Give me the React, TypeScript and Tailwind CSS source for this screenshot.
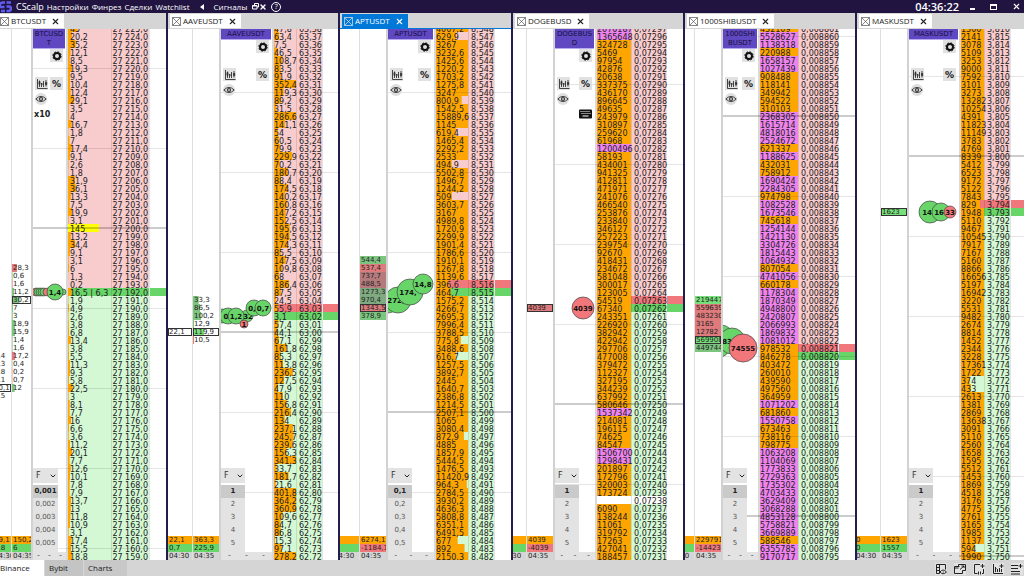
import React from 'react';
import { ChevronDown, X } from 'lucide-react';
import clsx from 'clsx';

const ROW = 8;
const ROWS = 67;

type Tone = 'green' | 'red' | 'paleGreen' | 'mutedRed' | 'mutedGreen' | 'none';

interface ClusterRow {
  text: string;
  tone: Tone;
  fill: number;
  boxed?: boolean;
}

interface Cluster {
  start: number;
  rows: ClusterRow[];
  total: string;
  delta: string;
  deltaTone: Tone;
  time: string;
}

interface Bubble {
  x: number;
  y: number;
  r: number;
  side: 'buy' | 'sell';
  text?: string;
  textX?: number;
}

interface Market {
  symbol: string;
  active?: boolean;
  topTick: number;
  decimals: number;
  bestAsk: number;
  sharedBest?: boolean;
  fullVolume: number;
  volumes: string;
  priceRight?: boolean;
  sizes: string[];
  badge?: 'x10' | 'keyboard';
  older: Cluster;
  latest: Cluster;
  bubbles: Bubble[];
  widths: { older: string; cluster: string; latest: string; volume: string; price: string; rest: string; form: string };
}

const toneClass: Record<Tone, string> = {
  green: 'from-[#7cc57f] to-[#7cc57f]',
  red: 'from-[#e07b7d] to-[#e07b7d]',
  paleGreen: 'from-[#78e07b] to-[#78e07b]',
  mutedRed: 'from-[#b57a7c] to-[#b57a7c]',
  mutedGreen: 'from-[#80ab81] to-[#80ab81]',
  none: 'from-transparent to-transparent',
};

const row = (text: string, tone: Tone = 'none', fill = 100, boxed = false): ClusterRow => ({ text, tone, fill, boxed });

const blank = (total = '', delta = ''): Cluster => ({
  start: 0,
  rows: [],
  total,
  delta,
  deltaTone: 'green',
  time: '04:30',
});

const markets: Market[] = [
  {
    symbol: 'BTCUSDT',
    topTick: 27225,
    decimals: 0,
    bestAsk: 33,
    sharedBest: true,
    fullVolume: 200,
    priceRight: true,
    volumes:
      '45 20,2 35,2 12,1 8,5 19,3 9,5 10,4 12,4 29,1 3,5 4 16,7 1,8 7 17,4 9,1 2,6 1,8 31,9 36,1 13,3 7,5 19,9 3,1 145 13,2 34,4 9,1 3,1 6 1,3 0,2 16,5|6,3 1,9 4,9 2,6 3,8 6,8 13,4 3,8 5,5 11,3 9,3 5,8 22,5 3 8,1 7,7 16 6,6 3,6 11,2 20,1 7,7 12,6 10,1 7,8 7,9 13,7 13 11,8 10,9 3,1 17,4 15,5 18,8',
    sizes: ['0,001', '0,002', '0,003', '0,004', '0,005'],
    badge: 'x10',
    older: {
      ...blank('39,1', '5,8'),
      start: 41,
      rows: [row('1,4'), row('0,3'), row('1,8'), row('0,1'), row('20,1', 'none', 0, true), row('1,5')],
    },
    latest: {
      start: 30,
      rows: [
        row('28,3', 'red', 26), row('0,6', 'green', 3), row('1,6', 'red', 3), row('11,2', 'green', 12),
        row('30,2', 'green', 40, true), row('7', 'green', 5), row('3', 'green', 4), row('18,9', 'green', 18),
        row('15,9', 'green', 16), row('1,4', 'green', 3), row('1,6', 'green', 3), row('17,2', 'red', 18),
        row('0,4', 'green', 2), row('0,2', 'red', 2), row('0,7', 'red', 2), row('12', 'green', 14),
      ],
      total: '150,2',
      delta: '6',
      deltaTone: 'paleGreen',
      time: '04:35',
    },
    bubbles: [
      { x: 3, y: 268, r: 4, side: 'sell' },
      { x: 5, y: 268, r: 4, side: 'buy' },
      { x: 7, y: 268, r: 4, side: 'buy' },
      { x: 9, y: 268, r: 4, side: 'buy' },
      { x: 11, y: 268, r: 4, side: 'buy' },
      { x: 14, y: 268, r: 4, side: 'sell' },
      { x: 30, y: 268, r: 3, side: 'buy' },
      { x: 22, y: 268, r: 8, side: 'buy', text: '1,4' },
    ],
    widths: { older: 'w-[12px]', cluster: 'w-[18px]', latest: 'w-[21px]', volume: 'w-[44px]', price: 'w-[37px]', rest: 'w-[17px]', form: 'w-[25px]' },
  },
  {
    symbol: 'AAVEUSDT',
    topTick: 6338,
    decimals: 2,
    bestAsk: 35,
    fullVolume: 275,
    volumes:
      '47,8 63,4 7,5 46,5 108,7 83,5 91,9 352,4 119,3 89,2 31,5 286,6 141,1 54 60,5 79,9 229,9 70,2 180,7 88,4 174,5 140,2 160,8 147,2 152,5 195,6 194,5 174,3 85,5 147,5 109,8 68 186,4 87,5 24,5 55,9 3,1 57,4 44,1 67,1 161,8 85,3 113,8 236,5 127,5 47,9 110 156,8 216,4 134 237,1 245,7 239,6 156,3 341,3 33,7 181,7 21,6 401,8 364,2 360,9 109,6 84,7 86,8 15,3 97,1 278,2',
    sizes: ['1', '2', '3', '4', '5'],
    older: { ...blank('22,1', '0,7'), start: 38, rows: [row('22,1', 'none', 0, true)] },
    latest: {
      start: 34,
      rows: [
        row('33,3', 'green', 22), row('86,5', 'green', 28), row('100,2', 'green', 32),
        row('12,9', 'green', 4), row('119,9', 'paleGreen', 44, true), row('10,5', 'red', 4),
      ],
      total: '363,3',
      delta: '225,9',
      deltaTone: 'paleGreen',
      time: '04:35',
    },
    bubbles: [
      { x: 1, y: 292, r: 7, side: 'buy' },
      { x: 7, y: 292, r: 8, side: 'buy', text: '0', textX: 5 },
      { x: 26, y: 292, r: 6, side: 'buy', text: '32', textX: 27 },
      { x: 15, y: 292, r: 8, side: 'buy', text: '1,2' },
      { x: 23, y: 300, r: 4, side: 'sell', text: '1' },
      { x: 33, y: 284, r: 8, side: 'buy', text: '0,', textX: 31 },
      { x: 42, y: 284, r: 8, side: 'buy', text: '0,7' },
    ],
    widths: { older: 'w-[25px]', cluster: 'w-[24px]', latest: 'w-[28px]', volume: 'w-[23px]', price: 'w-[25px]', rest: 'w-[16px]', form: 'w-[24px]' },
  },
  {
    symbol: 'APTUSDT',
    active: true,
    topTick: 8548,
    decimals: 3,
    bestAsk: 32,
    fullVolume: 1000,
    volumes:
      '4007,2 629,9 3267 3232,6 1425,6 1220,2 1703,2 1275,8 3247 800,9 1542,5 15889,6 1145 619,4 1465,4 2292,2 2533 494,9 5502,8 1496,7 1244,2 509 3603,7 3167 4989,8 1720,9 2299,9 1901,4 1786,6 1910,1 1267,8 1139,6 396,6 464,7 1575,2 4266,7 2695,3 7996,4 3788,5 775,8 3488,6 616,7 1257,5 3892,7 2445 1640,7 2386,8 1214,5 2507,1 1065 3080,4 872,9 4885 1857,9 5444,5 1476,5 11420,9 964,3 2784,5 3930,2 4636,3 5808,8 6351,1 6491,5 677 892 2150,3',
    sizes: ['0,1', '0,2', '0,3', '0,4', '0,5'],
    older: blank(),
    latest: {
      start: 29,
      rows: [
        row('544,4', 'green'), row('537,4', 'red'), row('737,7', 'mutedRed'), row('488,5', 'mutedRed'),
        row('1273,3', 'mutedGreen'), row('970,4', 'mutedGreen'), row('1343,5', 'red', 100, true), row('378,9', 'green'),
      ],
      total: '6274,1',
      delta: '-1184,1',
      deltaTone: 'red',
      time: '04:35',
    },
    bubbles: [
      { x: 0, y: 279, r: 10, side: 'buy' },
      { x: 10, y: 276, r: 13, side: 'buy', text: '272,', textX: 8 },
      { x: 22, y: 268, r: 13, side: 'buy', text: '174,', textX: 20 },
      { x: 35, y: 260, r: 10, side: 'buy', text: '14,8' },
    ],
    widths: { older: 'w-[20px]', cluster: 'w-[26px]', latest: 'w-[28px]', volume: 'w-[33px]', price: 'w-[25px]', rest: 'w-[17px]', form: 'w-[24px]' },
  },
  {
    symbol: 'DOGEBUSD',
    topTick: 7297,
    decimals: 5,
    bestAsk: 34,
    fullVolume: 5000,
    volumes:
      '2070187 1365648 324728 5469 97954 42876 20638 337375 436170 896645 49635 243979 310897 259620 61968 1200496 58193 434001 941325 412811 471971 241076 466540 253876 233840 346127 257223 239754 92670 418431 234672 581048 300017 123005 54519 67340 243351 226920 382942 422942 297706 477008 379472 112327 327195 344239 637992 580646 1537342 214081 196115 74625 84547 1506700 1298431 201897 172796 320003 173724 - 6090 138244 11061 319792 17263 427041 188457',
    sizes: ['1', '2', '3', '4', '5'],
    badge: 'keyboard',
    older: blank(),
    latest: {
      start: 35,
      rows: [row('4039', 'red', 100, true)],
      total: '4039',
      delta: '-4039',
      deltaTone: 'red',
      time: '04:35',
    },
    bubbles: [{ x: 28, y: 284, r: 11, side: 'sell', text: '4039' }],
    widths: { older: 'w-[14px]', cluster: 'w-[26px]', latest: 'w-[28px]', volume: 'w-[35px]', price: 'w-[34px]', rest: 'w-[17px]', form: 'w-[24px]' },
  },
  {
    symbol: '1000SHIBUSDT',
    topTick: 8861,
    decimals: 6,
    bestAsk: 40,
    fullVolume: 5000,
    volumes:
      '432109 5528627 1138318 220988 1658157 1027439 908488 118141 349942 594522 310103 2368305 1615714 4818016 2524672 621337 1188625 432031 758912 1690424 2284305 974798 1082528 1673546 745618 1254144 1421130 3304726 1815443 1064932 807054 4741056 660178 1178304 1870349 4948800 2420807 2066993 1869832 1081012 978532 846278 403472 260010 439590 497560 364959 1071202 681860 1550758 673463 738116 798775 1063208 1104069 1773833 2729363 1735302 4703433 3629409 3068288 4853128 5758821 3669889 588546 6355785 9170717',
    sizes: ['1', '2', '3', '4', '5'],
    older: blank(),
    latest: {
      start: 34,
      rows: [
        row('219447', 'paleGreen'), row('559639', 'red'), row('483230', 'red'), row('3165', 'red'),
        row('12782', 'red'), row('569908', 'paleGreen', 100, true), row('449744', 'green'),
      ],
      total: '229791',
      delta: '-14423',
      deltaTone: 'red',
      time: '04:35',
    },
    bubbles: [
      { x: -2, y: 314, r: 13, side: 'buy' },
      { x: -3, y: 324, r: 9, side: 'buy' },
      { x: 9, y: 317, r: 13, side: 'buy' },
      { x: 20, y: 324, r: 14, side: 'sell', text: '74555' },
    ],
    widths: { older: 'w-[10px]', cluster: 'w-[26px]', latest: 'w-[28px]', volume: 'w-[39px]', price: 'w-[39px]', rest: 'w-[17px]', form: 'w-[24px]' },
  },
  {
    symbol: 'MASKUSDT',
    topTick: 3816,
    decimals: 3,
    bestAsk: 22,
    fullVolume: 1000,
    volumes:
      '1300 2141 3078 5109 3253 9000 7592 3101 3273 13282 10254 4391 11823 11149 3783 4769 8339 5412 6523 9172 5122 7843 829 1948 5110 9467 10545 7917 7167 5160 8866 16656 5197 16942 3220 5531 9482 2674 8814 1452 2344 3228 17361 1722 374 433 2613 1381 2869 13638 3091 5110 2560 1658 1595 5512 1453 1869 4518 3176 4775 2761 3165 1985 1137 594 1990',
    sizes: ['1', '2', '3', '4', '5'],
    older: blank('0', '0'),
    latest: {
      start: 23,
      rows: [row('1623', 'paleGreen', 100, true)],
      total: '1623',
      delta: '1557',
      deltaTone: 'paleGreen',
      time: '04:35',
    },
    bubbles: [
      { x: 21, y: 188, r: 11, side: 'buy', text: '14', textX: 18 },
      { x: 32, y: 188, r: 9, side: 'buy', text: '16', textX: 30 },
      { x: 41, y: 188, r: 6, side: 'sell', text: '33' },
    ],
    widths: { older: 'w-[24px]', cluster: 'w-[25px]', latest: 'w-[28px]', volume: 'w-[24px]', price: 'w-[25px]', rest: 'w-[14px]', form: 'w-[24px]' },
  },
];

// the partly covered SHIB print keeps its label left of the last sell
markets[4].bubbles[2] = { ...markets[4].bubbles[2], text: '83', textX: 4 };

const formatPrice = (tick: number, decimals: number) => {
  if (decimals === 0) {
    return `${Math.floor(tick / 1000)} ${String(tick % 1000).padStart(3, '0')},0`;
  }
  return (tick / 10 ** decimals).toFixed(decimals).replace('.', ',');
};

const ChartIcon: React.FC = () => (
  <svg viewBox="0 0 12 12" className="size-3" fill="none" stroke="#333" strokeWidth="0.9">
    <path d="M1.500 1v9.500H11.500" />
    <path d="M3.500 2.500v6.500M5.500 5v4M7.500 3v6M10 2v6.500" />
    <path d="M3 3.500h1v3H3zM9.500 4.500h1.200v2H9.500z" fill="#333" />
    <path d="M5 6h3" />
  </svg>
);

const GearIcon: React.FC = () => (
  <svg viewBox="0 0 10 10" className="size-[10px]" fill="none" stroke="#111">
    <circle cx="5" cy="5" r="3" strokeWidth="2" />
    <circle cx="5" cy="5" r="4.200" strokeWidth="1" strokeDasharray="1.650 1.650" />
  </svg>
);

const EyeIcon: React.FC = () => (
  <svg viewBox="0 0 12 12" className="size-3" fill="none" stroke="#333" strokeWidth="0.9">
    <path d="M.8 6Q6 .8 11.200 6 6 11.200.8 6z" />
    <circle cx="6" cy="6" r="1.500" strokeWidth="1.200" />
  </svg>
);

const KeyboardIcon: React.FC = () => (
  <svg viewBox="0 0 13 10" className="h-[10px] w-[13px]">
    <rect y="0.500" width="13" height="9" rx="1" fill="#111" />
    <path d="M1.500 2.500h10M2.500 4.500h9" stroke="#fff" strokeDasharray="1 1" />
    <path d="M3.500 7h6" stroke="#fff" />
  </svg>
);

const TabMark: React.FC<{ active?: boolean }> = ({ active }) => (
  <svg viewBox="0 0 9 9" className="size-[9px] shrink-0" fill="none" stroke={active ? '#e5e5e5' : '#555'} strokeWidth="0.7">
    <path d="M.5.5h8v8h-8zM.5.5l8 8M8.500.5l-8 8" />
  </svg>
);

const TitleBar: React.FC = () => (
  <header className="flex h-[13px] shrink-0 items-center bg-[#211441] text-[8px] leading-[10px] text-white">
    <svg viewBox="0 0 12 12" className="size-3 shrink-0" fill="none" stroke="#5f5df0" strokeWidth="2.400">
      <path d="M5 1.500H3Q0 1.500 0 4.500V6h4.500M5 10H1M6.500 1.500H11M6.500 5.500h2.500Q11 5.500 11 7.500t-2 2.500H6.500" />
    </svg>
    <span className="ml-1 text-[9px]">CScalp</span>
    <nav className="ml-[3px] flex items-center gap-[3px]">
      <button>Настройки</button>
      <button>Финрез</button>
      <button>Сделки</button>
      <button>Watchlist</button>
    </nav>
    <button aria-label="Свернуть" className="ml-[10px]">
      <svg viewBox="0 0 4 6" className="h-[6px] w-1" fill="#fff">
        <path d="M4 0v6L0 3z" />
      </svg>
    </button>
    <button className="ml-[10px]">Сигналы</button>
    <button aria-label="Окна" className="ml-[5px]">
      <svg viewBox="0 0 7 7" className="size-[7px]" fill="none" stroke="#fff" strokeWidth="1">
        <path d="M2.500 2.500V.5h4v3.500H5M.5 2.500H5v3.500H.5zM.5 3h4.500" />
      </svg>
    </button>
    <button aria-label="Закрыть все">
      <X className="size-[8px]" strokeWidth={4} />
    </button>
    <button aria-label="Помощь" className="ml-1 flex size-[10px] items-center justify-center rounded-full border border-white text-[7px] leading-[7px]">
      ?
    </button>
    <time className="mr-[11px] ml-auto text-[11px] font-semibold">04:36:22</time>
    <div className="mr-[3px] flex items-center gap-[15px]">
      <button aria-label="Свернуть окно" className="mt-1 h-[2px] w-[5px] bg-white" />
      <button aria-label="Развернуть окно" className="h-[6px] w-[7px] border border-t-2 border-white" />
      <button aria-label="Закрыть окно">
        <X className="size-[9px]" strokeWidth={3} />
      </button>
    </div>
  </header>
);

const ClusterColumn: React.FC<{ cluster: Cluster; outer: string; inner: string; edge: string }> = ({ cluster, outer, inner, edge }) => {
  const after = cluster.rows.length ? (ROWS - 3 - cluster.start - cluster.rows.length) * ROW : 0;
  return (
    <div className={clsx('flex shrink-0 items-stretch justify-end overflow-hidden text-[7px] leading-[8px]', outer, edge)}>
      <div className={clsx('flex shrink-0 flex-col justify-end', inner)}>
        {cluster.rows.map((item, i) => (
          <div
            key={i}
            className={clsx(
              'h-2 shrink-0 bg-linear-to-r bg-no-repeat pl-px whitespace-nowrap',
              toneClass[item.tone],
              item.boxed && 'outline-1 -outline-offset-1 outline-[#333]'
            )}
            style={{ backgroundSize: `${item.fill}% 100%` }}
          >
            {item.text}
          </div>
        ))}
        <div className="shrink-0" style={{ height: after }} />
        <div className="h-2 shrink-0 bg-[#ffa500] pl-px">{cluster.total}</div>
        <div className={clsx('h-2 shrink-0 pl-px whitespace-nowrap', cluster.deltaTone === 'red' ? 'bg-[#f0787d]' : 'bg-[#67d867]')}>
          {cluster.delta}
        </div>
        <div className="h-2 shrink-0 bg-[#d5d5d5] pl-px">{cluster.time}</div>
      </div>
    </div>
  );
};

const SquareButton: React.FC<{ label: string; children: React.ReactNode }> = ({ label, children }) => (
  <button aria-label={label} className="flex size-[13px] items-center justify-center bg-[#e1e1e1] text-[#111]">
    {children}
  </button>
);

const TickColumn: React.FC<{ market: Market }> = ({ market }) => (
  <div className="flex min-w-0 flex-1 flex-col overflow-hidden border-r-2 border-[#d9d9d9]">
    <svg className="absolute bottom-0 left-0 z-10 h-[536px] w-full" fontSize="7" fontWeight="700" textAnchor="middle">
      {market.bubbles.map((b, i) => (
        <g key={i}>
          <circle cx={b.x} cy={b.y} r={b.r} fill={b.side === 'buy' ? '#67d568' : '#f1777b'} stroke="#444" strokeWidth="0.7" />
          {b.text && (
            <text x={b.textX ?? b.x} y={b.y + 3} fill="#111">
              {b.text}
            </text>
          )}
        </g>
      ))}
    </svg>
    <div className="z-10 flex flex-col">
      <div className="mr-px border-b border-[#b7aaf0] bg-[#5f48c2] pt-px text-center text-[7px] leading-[9px] break-all text-[#16103a]">
        {market.symbol}
      </div>
      <div className="mr-[3px] flex justify-end">
        <SquareButton label="Настройки стакана">
          <GearIcon />
        </SquareButton>
      </div>
      <div className="mt-[15px] mr-[3px] ml-[2px] flex justify-between">
        <SquareButton label="График">
          <ChartIcon />
        </SquareButton>
        <SquareButton label="Проценты">
          <span className="text-[9px] leading-[12px] font-bold">%</span>
        </SquareButton>
      </div>
      <button aria-label="Показать" className="mt-[3px] ml-[2px] flex size-3 items-center justify-center rounded-full bg-[#dedede]">
        <EyeIcon />
      </button>
      {market.badge === 'x10' && <span className="mt-1 ml-[1px] text-[8px] leading-[12px] font-bold">x10</span>}
      {market.badge === 'keyboard' && (
        <button aria-label="Клавиатура" className="mt-1 mr-[3px] self-end">
          <KeyboardIcon />
        </button>
      )}
    </div>
    <div className="z-10 mt-auto">
      <div className={clsx('relative h-[15px] bg-[#e3e3e3]', market.widths.form)}>
        <select aria-label="Режим объёма" defaultValue="F" className="block h-[15px] w-full appearance-none bg-transparent py-0 pl-[3px] text-[8px] leading-[15px] text-[#333]">
          <option>F</option>
        </select>
        <ChevronDown className="pointer-events-none absolute top-1 right-[1px] size-2" strokeWidth={3} />
      </div>
      <div className={clsx('mt-[2px] flex flex-col bg-[#e3e3e3] pb-[2px]', market.widths.form)}>
        {market.sizes.map((size, i) => (
          <button
            key={size}
            className={clsx('h-[13px] text-center text-[7px] leading-[13px]', i === 0 ? 'bg-[#cacaca] font-bold text-[#222]' : 'text-[#555]')}
          >
            {size}
          </button>
        ))}
      </div>
      <div className="flex h-2 justify-around bg-[#e3e3e3] text-[8px] leading-[8px] text-[#666]">
        <span>-</span>
        <span>-</span>
        <span>-</span>
      </div>
    </div>
  </div>
);

const OrderBook: React.FC<{ market: Market }> = ({ market }) => {
  const { widths, bestAsk, sharedBest } = market;
  const volumes = market.volumes.split(' ');

  return (
    <div className="flex shrink-0 flex-col justify-end">
      <table className="w-px shrink-0 table-fixed border-separate border-spacing-0 text-[8px] leading-[5px] text-[#222]">
        <colgroup>
          <col className={widths.volume} />
          <col className={widths.price} />
          <col className={widths.rest} />
        </colgroup>
        <tbody>
          {volumes.map((volume, i) => {
            const value = parseFloat(volume.replace(',', '.')) || 0;
            const empty = volume === '-';
            const isAsk = i === bestAsk && !sharedBest;
            const isBid = i === (sharedBest ? bestAsk : bestAsk + 1);
            const side = clsx(
              empty && 'bg-white',
              !empty && isAsk && 'bg-[#f0787d]',
              !empty && isBid && 'bg-[#67d567]',
              !empty && !isAsk && !isBid && (i < bestAsk ? 'bg-[#f8cbcd]' : 'bg-[#d3f8d3]')
            );
            const bar =
              value >= 1000000
                ? 'from-[#ee82ee] to-[#ee82ee]'
                : volume === '145'
                  ? 'from-[#ffff00] to-[#ffff00]'
                  : 'from-[#ffa500] to-[#ffa500]';
            return (
              <tr key={i} className="h-2">
                <td
                  className={clsx(
                    'h-2 border-r border-black/10 bg-linear-to-r bg-no-repeat p-0 pt-[3px] whitespace-nowrap',
                    market.priceRight && 'pl-[2px]',
                    side,
                    bar
                  )}
                  style={{ backgroundSize: `${Math.min(100, (value / market.fullVolume) * 100)}% 100%` }}
                >
                  {empty ? '' : volume.replace('|', ' | ')}
                </td>
                <td className={clsx('h-2 p-0 pt-[3px] whitespace-nowrap', side, market.priceRight ? 'pr-px text-right' : 'pl-[2px]')}>
                  {formatPrice(market.topTick - i, market.decimals)}
                </td>
                <td className={clsx('h-2 border-l border-[#e4e4e4] p-0', (isAsk || isBid) && side)} />
              </tr>
            );
          })}
        </tbody>
      </table>
    </div>
  );
};

const PriceLines: React.FC<{ market: Market }> = ({ market }) => (
  <div className="pointer-events-none absolute inset-0 overflow-hidden">
    {Array.from({ length: ROWS }, (_, i) => i)
      .filter(i => (market.topTick - i) % 10 === 0)
      .map(i => (
        <div
          key={i}
          className={clsx('absolute inset-x-0', (market.topTick - i) % 50 === 0 ? 'h-[2px] bg-black/20' : 'h-px bg-black/10')}
          style={{ bottom: (ROWS - 1 - i) * ROW + 3 }}
        />
      ))}
  </div>
);

const MarketPanel: React.FC<{ market: Market; first: boolean; last: boolean }> = ({ market, first, last }) => (
  <section className={clsx('flex min-w-0 flex-col overflow-hidden', !last && 'border-r-2 border-[#211d4d]')}>
    <div className={clsx('flex h-4 shrink-0 border-b bg-[#d5d5d5]', market.active ? 'border-[#0078d7]' : 'border-[#d5d5d5]', !first && 'pl-[2px]')}>
      <div className={clsx('mt-px flex items-center pr-1', market.active ? 'bg-[#0078d7] text-white' : 'bg-white text-[#222]', !first && 'pl-[2px]')}>
        <TabMark active={market.active} />
        <span className="ml-[2px] font-['Open_Sans',sans-serif] text-[8px] leading-[10px]">{market.symbol}</span>
        <button aria-label={`Закрыть ${market.symbol}`} className="ml-[5px]">
          <X className="size-[9px]" strokeWidth={3} />
        </button>
      </div>
    </div>
    <div className="flex min-h-0 flex-1 overflow-hidden bg-white">
      <ClusterColumn cluster={market.older} outer={market.widths.older} inner={market.widths.cluster} edge="border-r border-[#dedede]" />
      <ClusterColumn cluster={market.latest} outer={market.widths.latest} inner="w-full" edge="border-r-2 border-[#d2d2d2]" />
      <div className="relative flex min-w-0 flex-1 overflow-hidden">
        <TickColumn market={market} />
        <OrderBook market={market} />
        <PriceLines market={market} />
      </div>
    </div>
  </section>
);

const FooterBar: React.FC = () => (
  <footer className="flex h-4 shrink-0 items-stretch bg-[#d5d5d5] text-[8px] text-[#222]">
    <button className="w-[44px] bg-white text-left">Binance</button>
    <button className="ml-px w-[38px] bg-[#c4c4c4] pl-1 text-left">Bybit</button>
    <button className="ml-px w-[43px] bg-[#c8c8c8] pl-1 text-left">Charts</button>
    <div className="ml-auto flex items-center gap-[7px] pr-px pt-[2px]">
      <button aria-label="Стаканы" className="bg-[#e2e2e2]">
        <svg viewBox="0 0 12 12" className="size-3" fill="none" stroke="#222">
          <path d="M1.500 1.500h9v5M1.500 1.500v9h3M4.500 1.500v9M1.500 4.500h3M1.500 7.500h3" />
          <path d="M5 9q3-4 6.500 0-3.500 3.500-6.500 0zM7.800 9h1" />
        </svg>
      </button>
      <button aria-label="Новое окно" className="bg-[#e2e2e2]">
        <svg viewBox="0 0 12 12" className="size-3" fill="none" stroke="#222">
          <path d="M4.500 3.500V1.500h7v6h-3M8.500 7.500v3h-8v-7h5M.5 5h4M6 6.500l4-3.500M7.500 3h2.500v2" />
        </svg>
      </button>
      <button aria-label="Добавить окно" className="bg-[#e2e2e2]">
        <svg viewBox="0 0 12 12" className="size-3" fill="none" stroke="#222">
          <path d="M7 1.500H1.500v9h3M10.500 6v4.500H9M9.500 1v4M7.500 3h4" />
          <path d="M5.500 8.500v3M7.500 8.500v3" />
        </svg>
      </button>
      <button aria-label="Добавить график" className="bg-[#e2e2e2]">
        <svg viewBox="0 0 12 12" className="size-3" fill="none" stroke="#222">
          <path d="M1.500 1v9.500H11M3.500 4v5M5.500 6v3M7.500 5v4M9.500 6v3M9.500 1v4M7.500 3h4M3 5.500h1.500" />
        </svg>
      </button>
      <button aria-label="Добавить список" className="bg-[#e2e2e2]">
        <svg viewBox="0 0 12 12" className="size-3" fill="none" stroke="#222">
          <path d="M0 2.500h7M0 5.500h7M0 8.500h9M0 11h9M9.500 1v4M7.500 3h4" />
        </svg>
      </button>
    </div>
  </footer>
);

const App: React.FC = () => (
  <div className="flex h-screen flex-col overflow-hidden bg-white font-['Open_Sans',sans-serif] text-[#222]">
    <TitleBar />
    <main className="grid min-h-0 flex-1 grid-cols-[168fr_172fr_173fr_172fr_172fr_167fr] grid-rows-[minmax(0,1fr)] font-['DejaVu_Sans',sans-serif]">
      {markets.map((market, i) => (
        <MarketPanel key={market.symbol} market={market} first={i === 0} last={i === markets.length - 1} />
      ))}
    </main>
    <FooterBar />
  </div>
);

export default App;
